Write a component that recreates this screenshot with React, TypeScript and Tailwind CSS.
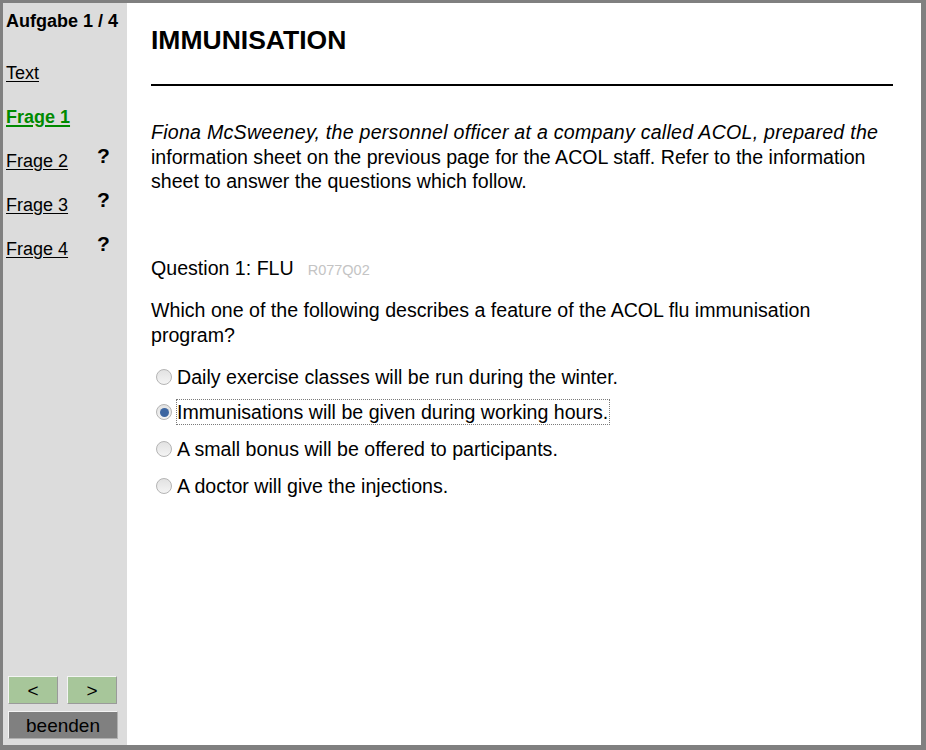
import React from 'react';

const tasks = [
  { label: 'Text', active: false, open: false },
  { label: 'Frage 1', active: true, open: false },
  { label: 'Frage 2', active: false, open: true },
  { label: 'Frage 3', active: false, open: true },
  { label: 'Frage 4', active: false, open: true },
];

const options = [
  'Daily exercise classes will be run during the winter.',
  'Immunisations will be given during working hours.',
  'A small bonus will be offered to participants.',
  'A doctor will give the injections.',
];

// small per-row nudges so the rows sit where the original ones do
const rowMargins = ['mt-0', '-mt-[1px]', 'mt-[1px]', 'mt-[1px]'];

const Radio = ({ checked }: { checked: boolean }) => (
  <span className="flex h-[16px] w-[16px] shrink-0 items-center justify-center rounded-full border border-[#b4b4b4] bg-gradient-to-b from-[#e2e2e2] to-[#f4f4f4]">
    {checked && <span className="h-[9px] w-[9px] rounded-full bg-[#3d66a1]" />}
  </span>
);

const Sidebar = () => {
  return (
    <aside className="flex w-[124px] shrink-0 flex-col bg-[#dcdcdc] text-[18px] text-black">
      <div className="px-[3px] pt-[7px] font-bold leading-[22px]">Aufgabe 1 / 4</div>

      <nav className="mt-[19px] flex flex-col px-[3px]">
        {tasks.map((t) => (
          <div key={t.label} className="flex h-[44px] items-center">
            <span className="w-[91px] shrink-0">
              <a
                href="#"
                className={
                  t.active
                    ? 'font-bold text-[#008a00] underline decoration-2 underline-offset-2'
                    : 'text-black underline underline-offset-2'
                }
              >
                {t.label}
              </a>
            </span>
            {t.open && (
              <span className="mt-[6px] self-start text-[21px] font-bold leading-[22px]">?</span>
            )}
          </div>
        ))}
      </nav>

      {/* Navigation buttons */}
      <div className="mt-auto flex flex-col gap-[7px] pb-[6px] pl-[5px]">
        <div className="flex gap-[9px]">
          <button className="h-[28px] w-[50px] border border-b-[#9a9a9a] border-l-[#f4f4f4] border-r-[#9a9a9a] border-t-[#f4f4f4] bg-[#a7c69a] text-[19px] leading-none">
            &lt;
          </button>
          <button className="h-[28px] w-[50px] border border-b-[#9a9a9a] border-l-[#f4f4f4] border-r-[#9a9a9a] border-t-[#f4f4f4] bg-[#a7c69a] text-[19px] leading-none">
            &gt;
          </button>
        </div>
        <button className="h-[28px] w-[110px] border border-b-[#b0b0b0] border-l-[#f4f4f4] border-r-[#b0b0b0] border-t-[#f4f4f4] bg-[#808080] text-[19px] leading-none text-black">
          beenden
        </button>
      </div>
    </aside>
  );
};

export default function App() {
  return (
    <div
      className="flex h-[750px] w-[926px] bg-[#808080] pb-[5px] pl-[3px] pr-[5px] pt-[3px]"
      style={{ fontFamily: '"Liberation Sans", Arial, sans-serif' }}
    >
      <Sidebar />

      <main className="flex-1 overflow-hidden bg-white pl-[24px] pr-[28px] text-[19.6px] leading-[24.5px] text-black">
        <h1 className="pt-[22px] text-[26.5px] font-bold leading-[30px]">IMMUNISATION</h1>
        <hr className="mt-[29px] border-0 border-t-2 border-black" />

        <p className="mt-[34px]">
          <i className="tracking-[0.25px]">
            Fiona McSweeney, the personnel officer at a company called ACOL, prepared the
          </i>{' '}
          information sheet on the previous page for the ACOL staff. Refer to the information
          sheet to answer the questions which follow.
        </p>

        <div className="mt-[62px]">
          Question 1: FLU
          <span className="ml-[14px] text-[14.5px] text-[#c4c4c4]">R077Q02</span>
        </div>

        <p className="mt-[16px]">
          Which one of the following describes a feature of the ACOL flu immunisation program?
        </p>

        <div className="mt-[12px] flex flex-col">
          {options.map((o, i) => (
            <label key={o} className={'flex h-[36px] items-center pl-[5px] ' + rowMargins[i]}>
              <Radio checked={i === 1} />
              <span
                className={
                  'ml-[4px] border border-dotted pr-[1px] ' +
                  (i === 1 ? 'border-[#7a7a7a]' : 'border-transparent')
                }
              >
                {o}
              </span>
            </label>
          ))}
        </div>
      </main>
    </div>
  );
}
